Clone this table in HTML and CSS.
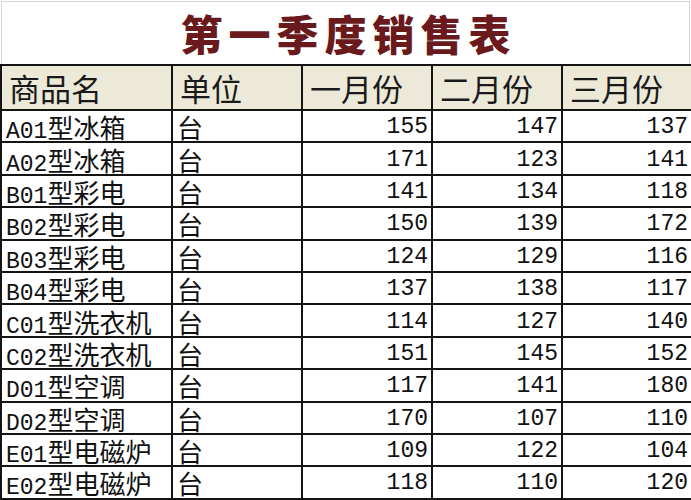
FILE: index.html
```html
<!DOCTYPE html>
<html lang="zh-CN">
<head>
<meta charset="utf-8">
<title>第一季度销售表</title>
<link rel="stylesheet" href="styles.css">
</head>
<body>
<div class="sheet">
  <div class="title">第一季度销售表</div>
  <table class="sales">
    <colgroup>
      <col class="c-name"><col class="c-unit"><col class="c-m"><col class="c-m"><col class="c-m">
    </colgroup>
    <thead>
      <tr><th>商品名</th><th>单位</th><th>一月份</th><th>二月份</th><th>三月份</th></tr>
    </thead>
    <tbody>
      <tr><td><span class="code">A01</span>型冰箱</td><td>台</td><td class="num">155</td><td class="num">147</td><td class="num">137</td></tr>
      <tr><td><span class="code">A02</span>型冰箱</td><td>台</td><td class="num">171</td><td class="num">123</td><td class="num">141</td></tr>
      <tr><td><span class="code">B01</span>型彩电</td><td>台</td><td class="num">141</td><td class="num">134</td><td class="num">118</td></tr>
      <tr><td><span class="code">B02</span>型彩电</td><td>台</td><td class="num">150</td><td class="num">139</td><td class="num">172</td></tr>
      <tr><td><span class="code">B03</span>型彩电</td><td>台</td><td class="num">124</td><td class="num">129</td><td class="num">116</td></tr>
      <tr><td><span class="code">B04</span>型彩电</td><td>台</td><td class="num">137</td><td class="num">138</td><td class="num">117</td></tr>
      <tr><td><span class="code">C01</span>型洗衣机</td><td>台</td><td class="num">114</td><td class="num">127</td><td class="num">140</td></tr>
      <tr><td><span class="code">C02</span>型洗衣机</td><td>台</td><td class="num">151</td><td class="num">145</td><td class="num">152</td></tr>
      <tr><td><span class="code">D01</span>型空调</td><td>台</td><td class="num">117</td><td class="num">141</td><td class="num">180</td></tr>
      <tr><td><span class="code">D02</span>型空调</td><td>台</td><td class="num">170</td><td class="num">107</td><td class="num">110</td></tr>
      <tr><td><span class="code">E01</span>型电磁炉</td><td>台</td><td class="num">109</td><td class="num">122</td><td class="num">104</td></tr>
      <tr><td><span class="code">E02</span>型电磁炉</td><td>台</td><td class="num">118</td><td class="num">110</td><td class="num">120</td></tr>
    </tbody>
  </table>
</div>
</body>
</html>
```

FILE: styles.css
```css
html, body {
  margin: 0;
  padding: 0;
  background: #ffffff;
}

.sheet {
  width: 691px;
  height: 500px;
  overflow: hidden;
  font-family: "Noto Sans CJK SC", sans-serif;
  color: #111;
}

.title {
  box-sizing: border-box;
  height: 63px;
  margin: 1px 1px 0 1px;
  border: 1px solid #d4d4d4;
  border-bottom: none;
  text-align: center;
  font-size: 42px;
  font-weight: 900;
  letter-spacing: 6px;
  line-height: 62px;
  color: #6a1a1c;
  padding-left: 6px;
}

.sales {
  border-collapse: collapse;
  table-layout: fixed;
  width: 691px;
}

.c-name { width: 171px; }
.c-unit { width: 130px; }
.c-m { width: 130px; }

.sales th,
.sales td {
  border: 2px solid #141414;
  padding: 0;
  white-space: nowrap;
}

.sales thead tr { height: 45px; }
.sales tbody tr { height: 32.4px; }

.sales th {
  background: #ece9d8;
  font-weight: 400;
  font-size: 31px;
  text-align: left;
  padding-left: 7px;
  color: #1a1a1a;
  line-height: 36px;
}

.sales td {
  font-size: 26px;
  line-height: 26px;
  padding-left: 4px;
  padding-top: 2px;
}

.sales td.num {
  text-align: right;
  padding-right: 3px;
  padding-left: 0;
  font-family: "Liberation Mono", monospace;
  font-size: 23px;
}

.code {
  font-family: "Liberation Mono", monospace;
  font-size: 23px;
  line-height: 0;
}
```
